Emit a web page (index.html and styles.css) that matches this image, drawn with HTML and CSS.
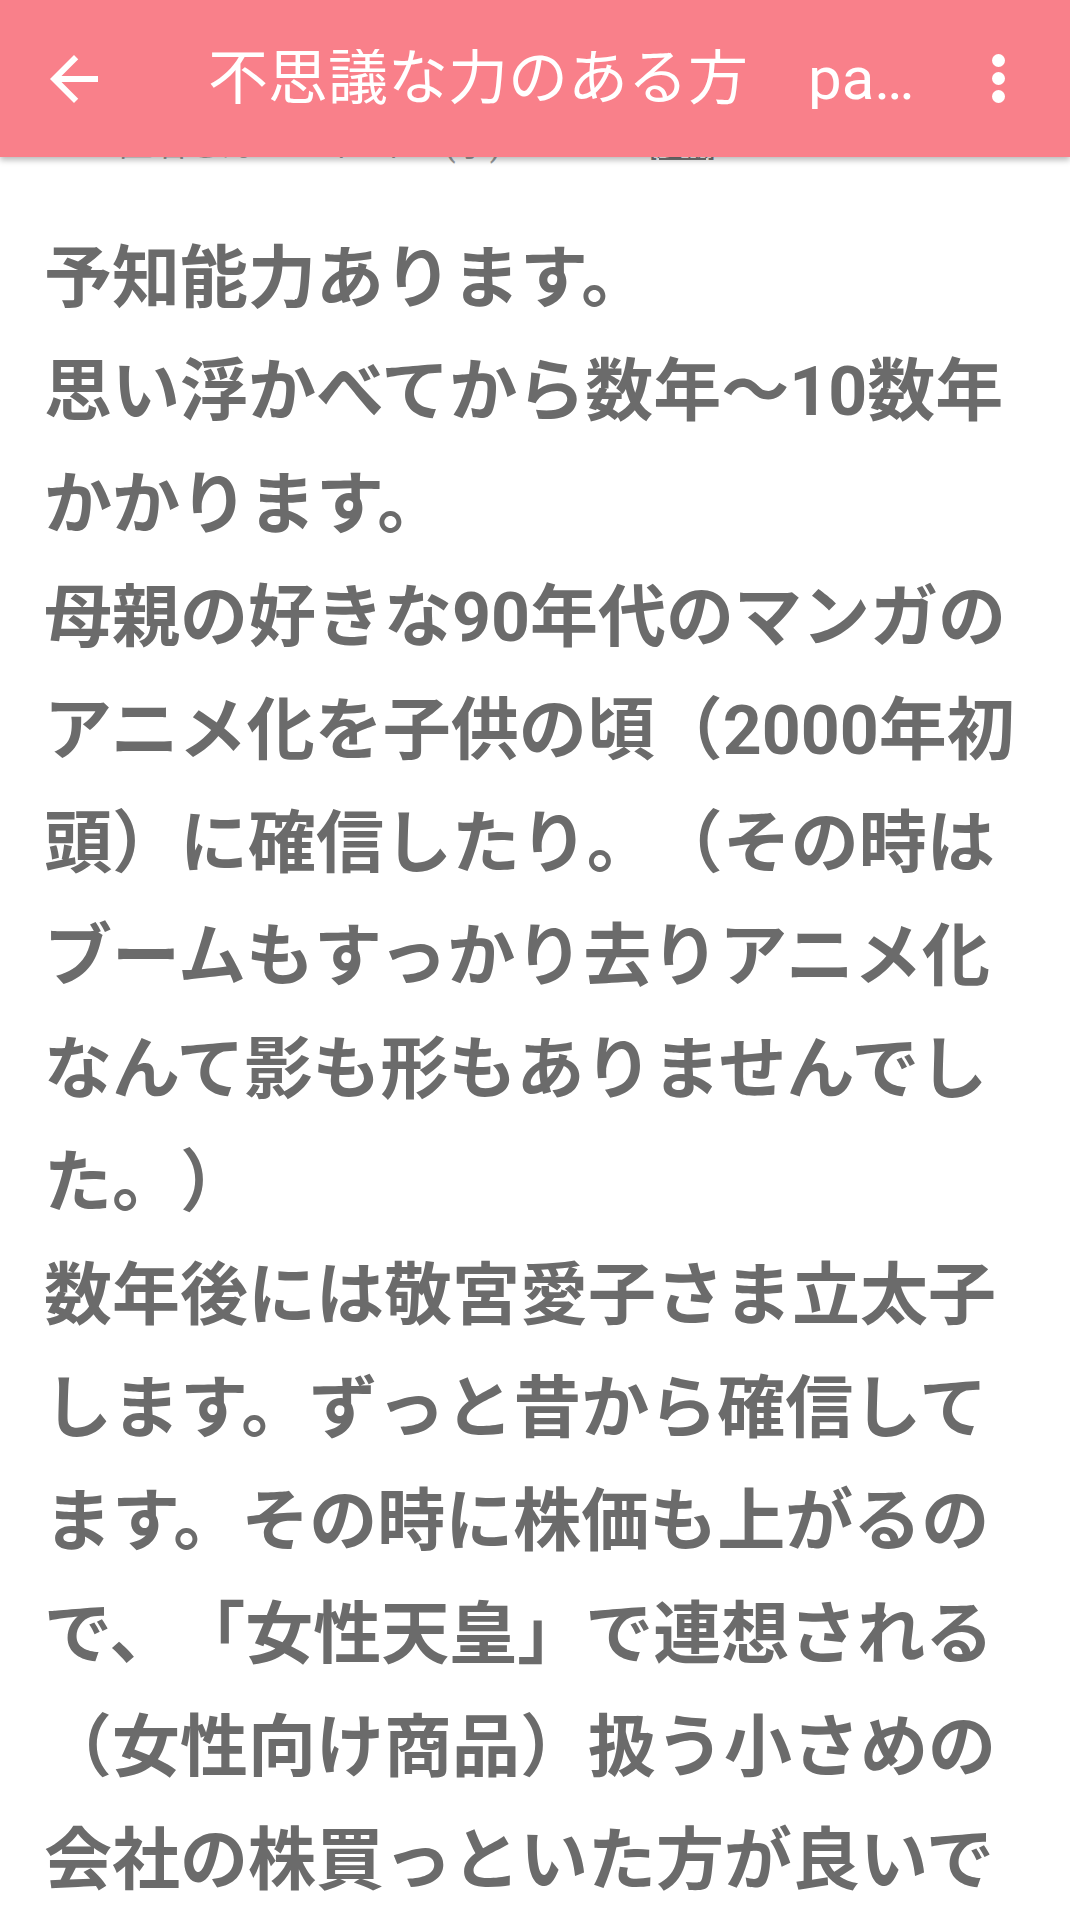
FILE: index.html
```html
<!DOCTYPE html>
<html lang="ja">
<head>
<meta charset="utf-8">
<title>不思議な力のある方　part2</title>
<link rel="stylesheet" href="styles.css">
</head>
<body>
<header class="appbar">
  <button class="back" aria-label="戻る">
    <svg viewBox="0 0 24 24" width="72" height="72"><path d="M20 11H7.83l5.59-5.59L12 4l-8 8 8 8 1.41-1.41L7.83 13H20v-2z" fill="#ffffff"/></svg>
  </button>
  <h1 class="title">不思議な力のある方　part2</h1>
  <button class="menu" aria-label="メニュー">
    <span class="dot"></span><span class="dot"></span><span class="dot"></span>
  </button>
</header>
<main class="thread">
  <article class="post">
    <div class="meta">385. 匿名さん 2018/11/14(水) 20:33:18 <a class="report" href="#">[通報]</a></div>
    <p class="body">予知能力あります。<br>思い浮かべてから数年～10数年かかります。<br>母親の好きな90年代のマンガのアニメ化を子供の頃（2000年初頭）に確信したり。（その時はブームもすっかり去りアニメ化なんて影も形もありませんでした。）<br>数年後には敬宮愛子さま立太子します。ずっと昔から確信してます。その時に株価も上がるので、「女性天皇」で連想される（女性向け商品）扱う小さめの会社の株買っといた方が良いで</p>
  </article>
</main>
</body>
</html>
```

FILE: styles.css
```css
html, body {
  margin: 0;
  padding: 0;
  background: #ffffff;
}

body {
  width: 1070px;
  height: 1932px;
  overflow: hidden;
  font-family: Roboto, "Noto Sans CJK JP", sans-serif;
  text-spacing-trim: space-all;
}

.appbar {
  position: fixed;
  top: 0;
  left: 0;
  right: 0;
  height: 157px;
  background: #f9808a;
  box-shadow: 0 3px 6px rgba(0, 0, 0, 0.28);
  display: flex;
  align-items: center;
  z-index: 10;
}

.back {
  border: 0;
  background: none;
  padding: 0;
  margin-left: 38px;
  width: 72px;
  height: 72px;
  display: flex;
}

.title {
  margin: 0 0 0 98px;
  flex: 0 0 717px;
  width: 717px;
  color: #ffffff;
  font-size: 60px;
  font-weight: 400;
  line-height: 1;
  white-space: nowrap;
  overflow: hidden;
  text-overflow: ellipsis;
}

.menu {
  border: 0;
  background: none;
  padding: 0;
  margin-left: 67px;
  display: flex;
  flex-direction: column;
  gap: 5px;
}

.dot {
  width: 13px;
  height: 13px;
  border-radius: 50%;
  background: #ffffff;
}

.thread {
  padding: 120px 36px 0 44px;
}

.meta {
  font-size: 34px;
  line-height: 48px;
  color: #9a9a9a;
  white-space: nowrap;
}

.report {
  color: #777777;
  font-size: 26px;
}

.body {
  margin: 52px 0 0;
  font-size: 68px;
  font-weight: 700;
  line-height: 113px;
  color: #6b6b6b;
}
```
